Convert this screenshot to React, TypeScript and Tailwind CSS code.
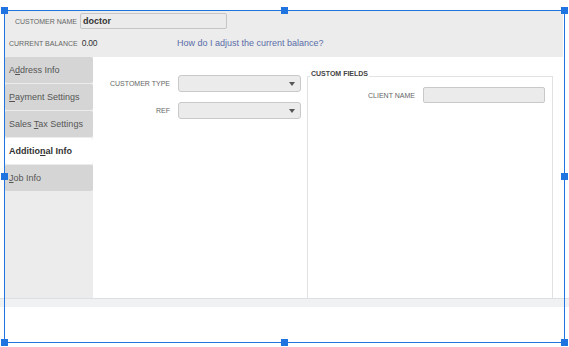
import React from "react";

const tabs: { pre: string; key: string; post: string; active?: boolean }[] = [
  { pre: "A", key: "d", post: "dress Info" },
  { pre: "", key: "P", post: "ayment Settings" },
  { pre: "Sales ", key: "T", post: "ax Settings" },
  { pre: "Additio", key: "n", post: "al Info", active: true },
  { pre: "", key: "J", post: "ob Info" },
];

const Caret = () => (
  <svg width="6" height="4" viewBox="0 0 6 4" className="mr-[5px]">
    <path d="M0 0 L6 0 L3 4 Z" fill="#555" />
  </svg>
);

const Select = () => (
  <div className="w-[123px] h-[17px] bg-[#ebebeb] border border-[#c9c9c9] rounded-[3px] flex items-center justify-end">
    <Caret />
  </div>
);

const Handle = ({ x, y }: { x: number; y: number }) => (
  <div
    className="absolute w-[7px] h-[7px] bg-[#1f74e0]"
    style={{ left: x - 3, top: y - 3 }}
  />
);

export default function App() {
  return (
    <div className="relative w-[569px] h-[347px] bg-white overflow-hidden font-['Liberation_Sans',Arial,sans-serif]">
      <div className="pt-[11px] pl-[5px] w-[563px]">
        {/* header */}
        <div className="h-[46px] bg-[#ececec] pt-[2px]">
          <div className="flex items-center h-[16px]">
            <span className="w-[72px] text-right text-[7px] text-[#666] leading-none">CUSTOMER NAME</span>
            <div className="ml-[3px] w-[147px] h-[16px] bg-[#ebebeb] border border-[#c6c6c6] rounded-[2px] flex items-center pl-[2px]">
              <span className="text-[9px] font-bold text-[#333] leading-none">doctor</span>
            </div>
          </div>
          <div className="flex items-center h-[14px] mt-[7px]">
            <div className="w-[172px] pl-[4px] flex items-center gap-[4px]">
              <span className="text-[7px] text-[#666] leading-none">CURRENT BALANCE</span>
              <span className="text-[8.5px] text-[#333] leading-none tracking-[-0.3px]">0.00</span>
            </div>
            <span className="text-[9px] text-[#5b6ca8] leading-none">How do I adjust the current balance?</span>
          </div>
        </div>

        {/* main */}
        <div className="flex h-[241px]">
          <div className="w-[88px] bg-[#ececec] flex flex-col gap-[1px]">
            {tabs.map((t) => (
              <div
                key={t.post}
                className={`h-[26px] flex items-center pl-[4px] rounded-[2px] text-[9px] leading-none ${
                  t.active ? "bg-white font-bold text-[#333]" : "bg-[#d5d5d5] text-[#555]"
                }`}
              >
                <span className="whitespace-pre">
                  {t.pre}
                  <u className="underline-offset-1">{t.key}</u>
                  {t.post}
                </span>
              </div>
            ))}
          </div>

          <div className="flex-1 bg-white flex">
            <div className="w-[214px] pt-[18px] flex flex-col gap-[10px]">
              <div className="flex items-center">
                <span className="w-[77px] text-right text-[7px] text-[#666] leading-none">CUSTOMER TYPE</span>
                <div className="ml-[8px]">
                  <Select />
                </div>
              </div>
              <div className="flex items-center">
                <span className="w-[77px] text-right text-[7px] text-[#666] leading-none">REF</span>
                <div className="ml-[8px]">
                  <Select />
                </div>
              </div>
            </div>

            <div className="relative w-[246px] mt-[19px] border-l border-t border-r border-[#e2e2e2] pt-[10px]">
              <span className="absolute top-[-7px] left-[2px] px-[1px] bg-white text-[7px] font-bold text-[#444] leading-[8px]">
                CUSTOM FIELDS
              </span>
              <div className="flex items-center">
                <span className="w-[107px] text-right text-[7px] text-[#666] leading-none">CLIENT NAME</span>
                <div className="ml-[8px] w-[122px] h-[16px] bg-[#ebebeb] border border-[#c9c9c9] rounded-[2px]" />
              </div>
            </div>
          </div>
        </div>
      </div>

      {/* bottom band */}
      <div className="h-[9px] w-full bg-[#f0f1f3] border-t border-[#dde0e3]" />

      {/* selection frame */}
      <div className="absolute left-[4px] top-[10px] w-[561px] h-[1px] bg-[#1f74e0]" />
      <div className="absolute left-[4px] top-[342px] w-[561px] h-[1px] bg-[#1f74e0]" />
      <div className="absolute left-[4px] top-[10px] w-[1px] h-[333px] bg-[#1f74e0]" />
      <div className="absolute left-[564px] top-[10px] w-[1px] h-[333px] bg-[#1f74e0]" />
      {[4, 284, 564].map((x) =>
        [10, 176, 342].map((y) =>
          x === 284 && y === 176 ? null : <Handle key={`${x}-${y}`} x={x} y={y} />
        )
      )}
    </div>
  );
}
